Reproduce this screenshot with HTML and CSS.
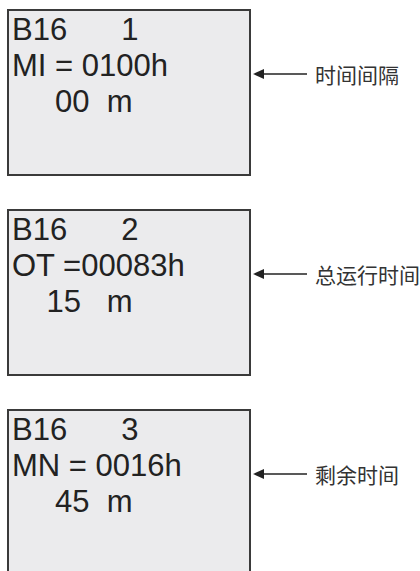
FILE: index.html
```html
<!DOCTYPE html>
<html lang="zh">
<head>
<meta charset="utf-8">
<link rel="stylesheet" href="styles.css">
</head>
<body>
<div class="page">
  <div class="row">
    <div class="lcd">
      <div class="line">B16<span class="idx">1</span></div>
      <div class="line">MI = 0100h</div>
      <div class="line">     00  m</div>
    </div>
    <div class="note">
      <svg class="arrow" width="54" height="12" viewBox="0 0 54 12"><polygon points="0,6 11,1 11,11" fill="#222"/><line x1="10" y1="6" x2="54" y2="6" stroke="#222" stroke-width="1.6"/></svg>
      <span class="label">时间间隔</span>
    </div>
  </div>
  <div class="row">
    <div class="lcd">
      <div class="line">B16<span class="idx">2</span></div>
      <div class="line">OT =00083h</div>
      <div class="line">    15   m</div>
    </div>
    <div class="note">
      <svg class="arrow" width="54" height="12" viewBox="0 0 54 12"><polygon points="0,6 11,1 11,11" fill="#222"/><line x1="10" y1="6" x2="54" y2="6" stroke="#222" stroke-width="1.6"/></svg>
      <span class="label">总运行时间</span>
    </div>
  </div>
  <div class="row">
    <div class="lcd">
      <div class="line">B16<span class="idx">3</span></div>
      <div class="line">MN = 0016h</div>
      <div class="line">     45  m</div>
    </div>
    <div class="note">
      <svg class="arrow" width="54" height="12" viewBox="0 0 54 12"><polygon points="0,6 11,1 11,11" fill="#222"/><line x1="10" y1="6" x2="54" y2="6" stroke="#222" stroke-width="1.6"/></svg>
      <span class="label">剩余时间</span>
    </div>
  </div>
</div>
</body>
</html>
```
FILE: styles.css
```css
html, body {
  margin: 0;
  padding: 0;
  background: #fff;
  overflow: hidden;
}
.page {
  display: flex;
  flex-direction: column;
  gap: 33px;
  padding: 9px 0 0 7px;
}
.row {
  display: flex;
  align-items: flex-start;
}
.lcd {
  box-sizing: border-box;
  width: 244px;
  height: 167px;
  border: 2px solid #3a3a3a;
  background: #ebebed;
  padding: 1px 0 0 3px;
  font-family: "Liberation Sans", Arial, sans-serif;
  font-size: 31px;
  color: #222;
}
.line {
  white-space: pre;
  line-height: 36px;
  height: 36px;
}
.idx {
  padding-left: 54px;
}
.note {
  display: flex;
  align-items: center;
  margin-top: 53px;
  margin-left: 2px;
  gap: 8px;
}
.arrow {
  display: block;
}
.label {
  font-family: "Noto Sans CJK SC", sans-serif;
  font-size: 21px;
  line-height: 24px;
  color: #333;
}
```
